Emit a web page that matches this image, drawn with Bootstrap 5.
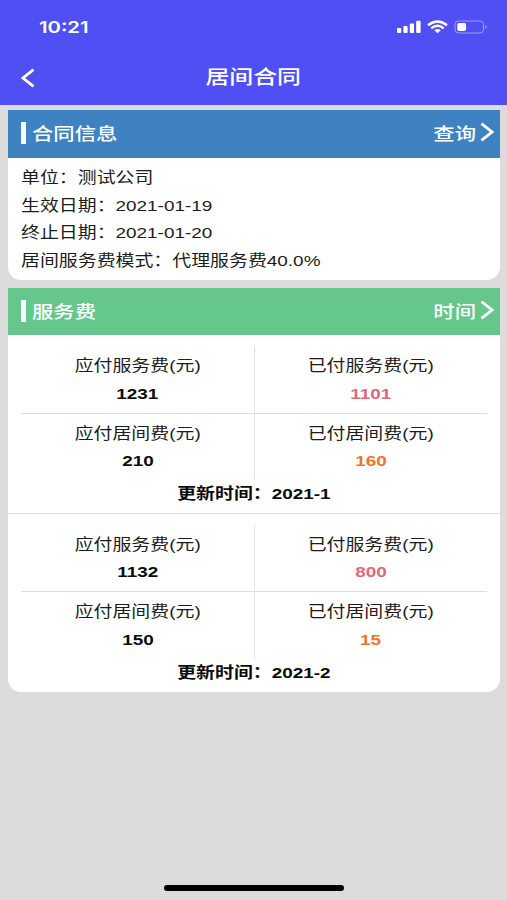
<!DOCTYPE html>
<html lang="zh-CN">
<head>
<meta charset="utf-8">
<meta name="viewport" content="width=device-width, initial-scale=1">
<title>居间合同</title>
<link rel="stylesheet" href="https://cdn.jsdelivr.net/npm/bootstrap@5.3.0/dist/css/bootstrap.min.css">
<style>
body{background:#dcdcdc;color:#1c1c1c;font-family:"Liberation Sans","Noto Sans CJK SC",sans-serif;font-size:15.5px;line-height:27.7px}
.screen{height:900px;overflow:hidden}
.topbar{background:#504ff4;height:105px}
.statusbar{height:53px;padding:0 18px 0 39px}
.titlebar{height:50px;padding:0 21px}
.titlebar .side{width:14px}
.clock{font:600 16.6px/20px Inter,sans-serif}
.page-title{font-size:19.6px;font-weight:500}
/* wide letterforms */
.wide{display:inline-block;white-space:nowrap;transform:scaleX(1.22)}
.from-start{transform-origin:0 50%}
.from-end{transform-origin:100% 50%}
.sheet{border:0;border-radius:0 0 13px 13px;overflow:hidden;margin:0 6.6px 0 7.7px;color:inherit}
.first-sheet{margin-top:5.4px}
.sheet-head{height:47.5px;padding:0 6.5px 0 13.3px;font-size:17.5px;font-weight:500;color:#fff}
.sheet-head .wide{padding-top:2px}
.sheet-head svg{margin-bottom:4px}
.head-blue{background:#3e82c1}
.head-green{background:#65c78b}
.tick{width:5.4px;height:22px;background:#fff;margin:0 5.5px 2px 0}
.info{padding:6.2px 13.3px 5px}
.period{padding-top:11px;padding-bottom:5px}
.period + .period{border-top:1px solid #dedede}
.quad{margin:0 13.3px}
.cell{padding:6px 0 0;height:67.5px;line-height:27.4px;text-align:center}
.cell.top-cell{border-bottom:1.5px solid #dedede}
.cell.low-cell{height:66.4px}
.cell.right-cell{border-left:1.5px solid #e2e2e2}
.num{font-weight:700;color:#0b0b0b}
.rose{color:#dc6b79}
.orange{color:#ee7530}
.home-bar{width:180px;height:6px;background:#000;margin-bottom:9px}
</style>
<script src="https://cdn.jsdelivr.net/npm/bootstrap@5.3.0/dist/js/bootstrap.bundle.min.js"></script>
</head>
<body>
<div class="screen d-flex flex-column">
  <header class="topbar text-white">
    <div class="statusbar d-flex align-items-center justify-content-between">
      <span class="clock wide from-start">10:21</span>
      <svg width="92" height="16" viewBox="0 0 92 16" fill="#fff">
        <rect x="0" y="9" width="4.200" height="5" rx="1"/><rect x="6.400" y="7" width="4.200" height="7" rx="1"/><rect x="12.800" y="4.500" width="4.200" height="9.500" rx="1"/><rect x="19.200" y="1.800" width="4.400" height="12.200" rx="1"/>
        <g fill="none" stroke="#fff" stroke-width="2.400"><path d="M31 6.300Q40.500-1.500 50 6.300"/><path d="M34.300 9.400Q40.500 4.300 46.700 9.400"/></g>
        <path d="M37.300 11.300Q40.500 8.800 43.700 11.300L40.500 14.200Z"/>
        <rect x="58" y="2" width="28.500" height="12" rx="3.500" fill="none" stroke="#fff" stroke-opacity=".45"/>
        <rect x="60.300" y="4" width="8.800" height="8" rx="1.800"/>
        <path d="M88.500 5.800q2.500 2.200 0 4.400z" opacity=".5"/>
      </svg>
    </div>
    <div class="titlebar d-flex align-items-center justify-content-between">
      <svg width="14" height="20" viewBox="0 0 14 20" fill="none" stroke="#fff" stroke-width="2.800"><path d="M12.500 1.700L2 10l10.500 8.300"/></svg>
      <span class="page-title wide">居间合同</span>
      <span class="side"></span>
    </div>
  </header>

  <main class="flex-grow-1">
    <section class="sheet card first-sheet">
      <div class="sheet-head head-blue d-flex align-items-center">
        <span class="tick"></span><span class="wide from-start me-auto">合同信息</span>
        <span class="wide from-end me-1">查询</span>
        <svg width="14" height="20" viewBox="0 0 14 20" fill="none" stroke="#fff" stroke-width="2.800"><path d="M1.500 1.700L12 10 1.500 18.300"/></svg>
      </div>
      <div class="info">
        <div><span class="wide from-start">单位：测试公司</span></div>
        <div><span class="wide from-start">生效日期：2021-01-19</span></div>
        <div><span class="wide from-start">终止日期：2021-01-20</span></div>
        <div><span class="wide from-start">居间服务费模式：代理服务费40.0%</span></div>
      </div>
    </section>

    <section class="sheet card mt-2">
      <div class="sheet-head head-green d-flex align-items-center">
        <span class="tick"></span><span class="wide from-start me-auto">服务费</span>
        <span class="wide from-end me-1">时间</span>
        <svg width="14" height="20" viewBox="0 0 14 20" fill="none" stroke="#fff" stroke-width="2.800"><path d="M1.500 1.700L12 10 1.500 18.300"/></svg>
      </div>
      <div class="period">
        <div class="quad row g-0">
          <div class="col-6 cell top-cell"><div><span class="wide">应付服务费(元)</span></div><div class="num"><span class="wide">1231</span></div></div>
          <div class="col-6 cell top-cell right-cell"><div><span class="wide">已付服务费(元)</span></div><div class="num rose"><span class="wide">1101</span></div></div>
          <div class="col-6 cell low-cell"><div><span class="wide">应付居间费(元)</span></div><div class="num"><span class="wide">210</span></div></div>
          <div class="col-6 cell low-cell right-cell"><div><span class="wide">已付居间费(元)</span></div><div class="num orange"><span class="wide">160</span></div></div>
        </div>
        <div class="num text-center"><span class="wide">更新时间：2021-1</span></div>
      </div>
      <div class="period">
        <div class="quad row g-0">
          <div class="col-6 cell top-cell"><div><span class="wide">应付服务费(元)</span></div><div class="num"><span class="wide">1132</span></div></div>
          <div class="col-6 cell top-cell right-cell"><div><span class="wide">已付服务费(元)</span></div><div class="num rose"><span class="wide">800</span></div></div>
          <div class="col-6 cell low-cell"><div><span class="wide">应付居间费(元)</span></div><div class="num"><span class="wide">150</span></div></div>
          <div class="col-6 cell low-cell right-cell"><div><span class="wide">已付居间费(元)</span></div><div class="num orange"><span class="wide">15</span></div></div>
        </div>
        <div class="num text-center"><span class="wide">更新时间：2021-2</span></div>
      </div>
    </section>
  </main>
  <div class="home-bar rounded-pill mx-auto"></div>
</div>
</body>
</html>
